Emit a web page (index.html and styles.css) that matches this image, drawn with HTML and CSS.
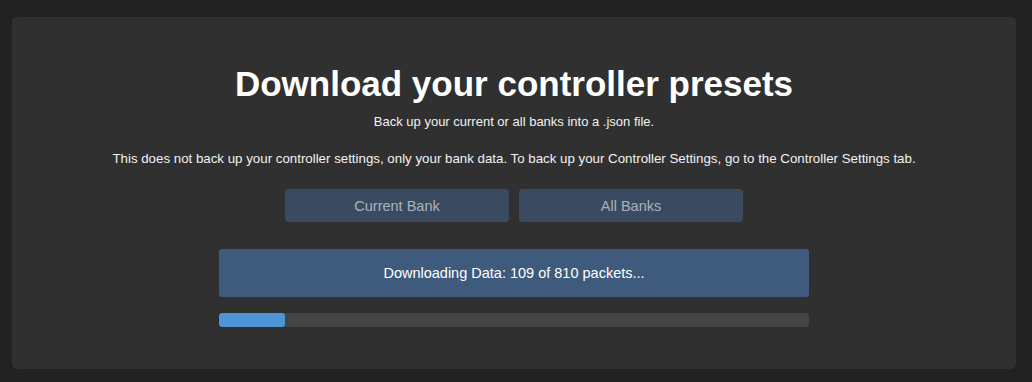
FILE: index.html
```html
<!DOCTYPE html>
<html lang="en">
<head>
    <meta charset="UTF-8">
    <title>Download Presets</title>
    <meta name="viewport" content="width=device-width, initial-scale=1">
    <link rel="stylesheet" href="styles.css">
</head>
<body>
    <main class="card">
        <h1 class="title">Download your controller presets</h1>
        <p class="subtitle">Back up your current or all banks into a .json file.</p>
        <p class="note">This does not back up your controller settings, only your bank data. To back up your Controller Settings, go to the Controller Settings tab.</p>
        <div class="actions">
            <button class="btn" type="button">Current Bank</button>
            <button class="btn" type="button">All Banks</button>
        </div>
        <div class="status">Downloading Data: 109 of 810 packets...</div>
        <div class="progress">
            <div class="progress-fill" style="width: 11.2%"></div>
        </div>
    </main>
</body>
</html>
```

FILE: styles.css
```css
body {
    font-family: "Liberation Sans", Arial, sans-serif;
    background: #222222;
    color: #f2f2f2;
    margin: 0;
    padding: 0;
}
.card {
    margin: 17px 16px 0 12px;
    height: 352px;
    box-sizing: border-box;
    background: #303030;
    border-radius: 5px;
    padding-top: 47px;
    display: flex;
    flex-direction: column;
    align-items: center;
}
.title {
    margin: 0;
    font-size: 35px;
    line-height: 40px;
    font-weight: bold;
    color: #ffffff;
}
.subtitle, .note {
    margin: 0;
    font-size: 13px;
    line-height: 16px;
}
.subtitle {
    margin-top: 10px;
}
.note {
    margin-top: 21px;
    font-size: 13.3px;
}
.actions {
    display: flex;
    gap: 10px;
    margin-top: 22px;
}
.btn {
    width: 224px;
    height: 33px;
    background: #3a4b61;
    color: #a9b2bc;
    border: none;
    border-radius: 4px;
    font-family: inherit;
    font-size: 14.5px;
    cursor: pointer;
}
.status {
    margin-top: 27px;
    width: 590px;
    height: 48px;
    background: #3e5a7c;
    border-radius: 3px;
    display: flex;
    align-items: center;
    justify-content: center;
    font-size: 14.5px;
    color: #ffffff;
}
.progress {
    margin-top: 16px;
    width: 590px;
    height: 14px;
    background: #444444;
    border-radius: 3px;
    overflow: hidden;
}
.progress-fill {
    height: 100%;
    background: #4e96d8;
    border-radius: 3px;
}
```
